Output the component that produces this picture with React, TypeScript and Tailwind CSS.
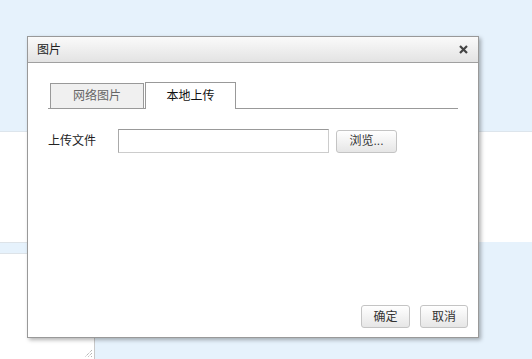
import React from "react";

const font = { fontFamily: '"Liberation Sans", "Noto Sans CJK SC", sans-serif' };

export default function App() {
  return (
    <div className="relative w-[532px] h-[359px] overflow-hidden bg-white text-[12px] text-[#222]" style={font}>
      {/* background page */}
      <div className="flex flex-col h-full">
        <div className="h-[132px] bg-[#e6f2fc] border-b border-[#dde5ec]" />
        <div className="h-[110px] bg-white" />
        <div className="flex flex-1">
          <div className="w-[95px] flex flex-col">
            <div className="h-[12px] bg-[#e6f2fc] border-y border-[#dde3e8]" />
            <div className="relative flex-1 bg-white border-r border-[#c8c8c8]">
              <svg className="absolute right-[1px] bottom-[1px]" width="9" height="9" viewBox="0 0 9 9">
                <path d="M8 1L1 8M8 4L4 8M8 7L7 8" stroke="#999" strokeWidth="1" strokeDasharray="1 1" />
              </svg>
            </div>
          </div>
          <div className="flex-1 bg-[#e6f2fc]" />
        </div>
      </div>

      {/* dialog */}
      <div className="absolute left-[27px] top-[36px] w-[452px] h-[302px] bg-white border border-[#999] shadow-[2px_2px_4px_rgba(0,0,0,0.3)] flex flex-col">
        <div className="h-[26px] flex items-center justify-between pl-[9px] pr-[10px] border-b border-[#a0a0a0] bg-gradient-to-b from-[#fafafa] to-[#e3e3e3]">
          <span className="text-[12px] text-[#222]">图片</span>
          <svg width="9" height="9" viewBox="0 0 9 9">
            <path d="M1 1L8 8M8 1L1 8" stroke="#444" strokeWidth="2.2" />
          </svg>
        </div>
        <div className="flex-1 flex flex-col px-[20px] pt-[19px]">
          <div className="flex items-end gap-[1px] pl-[2px] border-b border-[#999] h-[27px]">
            <div className="w-[94px] h-[26px] -mb-[1px] bg-[#f0f0f0] border border-[#999] flex items-center justify-center text-[#666]">
              网络图片
            </div>
            <div className="w-[91px] h-[27px] -mb-[1px] bg-white border border-b-0 border-[#999] flex items-center justify-center text-[#111]">
              本地上传
            </div>
          </div>
          <div className="flex items-center mt-[20px] h-[24px]">
            <span className="w-[70px] text-[#222]">上传文件</span>
            <div className="w-[211px] h-[24px] border border-[#ccc] border-t-[#999] border-l-[#aaa] bg-white" />
            <div className="ml-[7px] w-[61px] h-[23px] rounded-[3px] border border-[#c4c4c4] bg-gradient-to-b from-white to-[#e6e6e6] flex items-center justify-center text-[#333]">
              浏览...
            </div>
          </div>
          <div className="flex-1" />
        </div>
        <div className="flex justify-end gap-[10px] pr-[10px] pb-[9px]">
          <div className="w-[49px] h-[23px] rounded-[3px] border border-[#c4c4c4] bg-gradient-to-b from-white to-[#e6e6e6] flex items-center justify-center text-[#333]">
            确定
          </div>
          <div className="w-[48px] h-[23px] rounded-[3px] border border-[#c4c4c4] bg-gradient-to-b from-white to-[#e6e6e6] flex items-center justify-center text-[#333]">
            取消
          </div>
        </div>
      </div>
    </div>
  );
}
